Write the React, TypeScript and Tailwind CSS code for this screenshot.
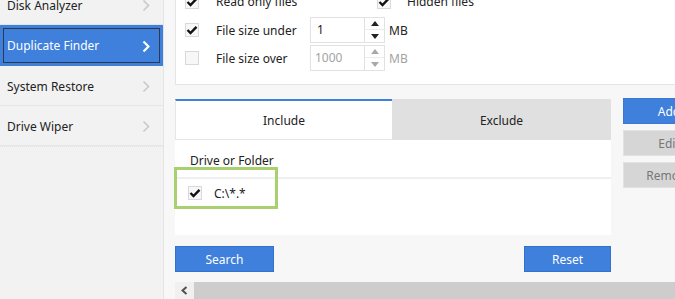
import React from "react";

const font = { fontFamily: '"Noto Sans", "Open Sans", Arial, sans-serif' };

function Chevron({ light }: { light?: boolean }) {
  return (
    <svg width="8" height="13" viewBox="0 0 8 13" className="shrink-0">
      <polyline
        points="1.5,1.5 6.5,6.5 1.5,11.5"
        fill="none"
        stroke={light ? "#ffffff" : "#c9c9c9"}
        strokeWidth={light ? 2.2 : 1.6}
      />
    </svg>
  );
}

function Check({ checked }: { checked?: boolean }) {
  return (
    <span className="flex h-[14px] w-[14px] shrink-0 items-center justify-center border border-[#d9d9d9] bg-[#f7f7f7]">
      {checked ? (
        <svg width="12" height="10" viewBox="0 0 12 10">
          <path d="M1.5 5 L4.5 8 L10.5 1.8" fill="none" stroke="#111" strokeWidth="2.4" />
        </svg>
      ) : null}
    </span>
  );
}

function Spinner({ disabled }: { disabled?: boolean }) {
  const c = disabled ? "#a8a8a8" : "#222";
  return (
    <div className="flex w-[20px] flex-col border border-l-0 border-[#e2e2e2]">
      <div className="flex h-1/2 items-center justify-center border-b border-[#ececec]">
        <svg width="8" height="5" viewBox="0 0 8 5">
          <polygon points="0,5 4,0 8,5" fill={c} />
        </svg>
      </div>
      <div className="flex h-1/2 items-center justify-center">
        <svg width="8" height="5" viewBox="0 0 8 5">
          <polygon points="0,0 8,0 4,5" fill={c} />
        </svg>
      </div>
    </div>
  );
}

const navItems = ["Disk Analyzer", "Duplicate Finder", "System Restore", "Drive Wiper"];

export default function App() {
  return (
    <div className="flex h-[299px] w-[675px] overflow-hidden bg-[#f7f7f7] text-[12px] text-[#222]" style={font}>
      {/* sidebar */}
      <aside className="flex w-[164px] shrink-0 flex-col border-r border-[#e4e4e4] bg-[#f2f2f2]">
        <div className="-mt-[15px]">
          {navItems.map((label) => {
            const active = label === "Duplicate Finder";
            return active ? (
              <div key={label} className="h-[41px] bg-[#3e80dc] p-[3px]">
                <div className="flex h-full items-center justify-between border border-[#2e3a4a] pl-[3px] pr-[9px] pt-[1px] text-white">
                  <span>{label}</span>
                  <Chevron light />
                </div>
              </div>
            ) : (
              <div
                key={label}
                className="flex h-[40px] items-center justify-between border-b border-[#e6e6e6] pl-[7px] pr-[13px] pt-[2px]"
              >
                <span>{label}</span>
                <Chevron />
              </div>
            );
          })}
        </div>
        <div className="border-t border-dotted border-[#e2e2e2]" />
      </aside>

      {/* main */}
      <main className="min-w-0 flex-1 overflow-hidden pl-[11px]">
        <div className="w-[560px]">
          {/* options panel */}
          <div className="-mt-[19px] border border-t-0 border-[#e4e4e4] bg-white pb-[12px] pl-[9px] pt-[7px]">
            <div className="flex h-[28px] items-center">
              <div className="flex w-[192px] items-center">
                <Check checked />
                <span className="ml-[17px]">Read only files</span>
              </div>
              <Check checked />
              <span className="ml-[16px]">Hidden files</span>
            </div>
            <div className="flex h-[28px] items-center">
              <Check checked />
              <span className="ml-[17px] w-[94px] pt-[2px]">File size under</span>
              <div className="flex h-[26px]">
                <div className="w-[55px] border border-[#e2e2e2] pl-[6px] pt-[2px] leading-[20px]">1</div>
                <Spinner />
              </div>
              <span className="ml-[4px] pt-[2px]">MB</span>
            </div>
            <div className="flex h-[28px] items-center">
              <Check />
              <span className="ml-[17px] w-[94px] pt-[2px]">File size over</span>
              <div className="flex h-[26px]">
                <div className="w-[55px] border border-[#e2e2e2] pl-[4px] pt-[2px] leading-[20px] text-[#a3a3a3]">1000</div>
                <Spinner disabled />
              </div>
              <span className="ml-[4px] pt-[2px] text-[#a3a3a3]">MB</span>
            </div>
          </div>

          {/* include / exclude */}
          <div className="mt-[14px] flex gap-[12px]">
            <div className="relative w-[436px]">
              <div className="flex h-[41px]">
                <div className="flex w-[217px] items-center justify-center border-l border-t-2 border-b border-[#e6e6e6] border-t-[#3e80dc] bg-white pt-[1px]">
                  Include
                </div>
                <div className="flex flex-1 items-center justify-center bg-[#e0e0e0] pt-[2px]">Exclude</div>
              </div>
              <div className="h-[95px] bg-white">
                <div className="flex h-[39px] items-center border-b-2 border-[#efefef] pl-[15px] pt-[4px]">
                  Drive or Folder
                </div>
                <div className="flex h-[26px] items-center pl-[13px] pt-[1px]">
                  <Check checked />
                  <span className="ml-[12px] pt-[2px]">C:\*.*</span>
                </div>
              </div>
              <div className="absolute left-[-1px] top-[68px] h-[42px] w-[104px] border-[3px] border-[#a9d06f]" />
            </div>
            <div className="-mt-px flex w-[92px] flex-col gap-[6px]">
              <div className="flex h-[26px] items-center justify-center border border-[#3a78d2] bg-[#3e80dc] pt-[2px] text-white">
                Add
              </div>
              <div className="flex h-[26px] items-center justify-center border border-[#e2e2e2] bg-[#d6d6d6] pt-[2px] text-[#777]">
                Edit
              </div>
              <div className="flex h-[26px] items-center justify-center border border-[#e2e2e2] bg-[#d6d6d6] pt-[2px] text-[#777]">
                Remove
              </div>
            </div>
          </div>

          {/* actions */}
          <div className="mt-[11px] flex w-[436px] justify-between">
            <div className="flex h-[26px] w-[99px] items-center justify-center border border-[#2f72d0] bg-[#3e80dc] pt-[2px] text-white">
              Search
            </div>
            <div className="flex h-[26px] w-[87px] items-center justify-center border border-[#2f72d0] bg-[#3e80dc] pt-[2px] text-white">
              Reset
            </div>
          </div>

          {/* scrollbar */}
          <div className="mt-[10px] flex h-[17px]">
            <div className="flex w-[19px] items-center justify-center bg-[#f0f0f0]">
              <svg width="7" height="9" viewBox="0 0 7 9">
                <polyline points="5.5,1 1.5,4.5 5.5,8" fill="none" stroke="#505050" strokeWidth="2" />
              </svg>
            </div>
            <div className="flex-1 bg-[#cdcdcd]" />
          </div>
        </div>
      </main>
    </div>
  );
}
